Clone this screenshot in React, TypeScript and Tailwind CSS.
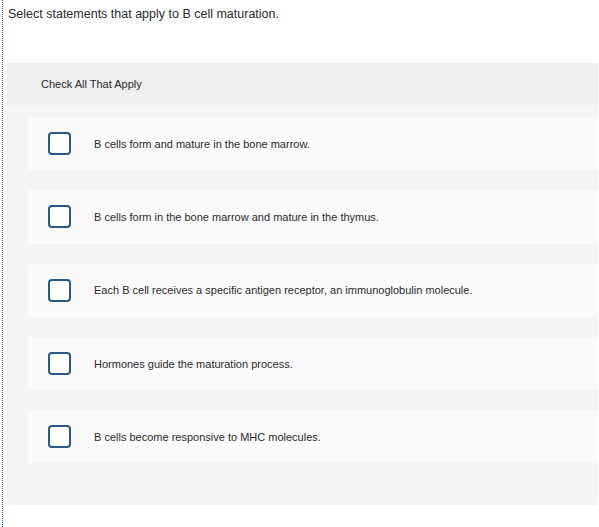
import React from "react";

const statements = [
  "B cells form and mature in the bone marrow.",
  "B cells form in the bone marrow and mature in the thymus.",
  "Each B cell receives a specific antigen receptor, an immunoglobulin molecule.",
  "Hormones guide the maturation process.",
  "B cells become responsive to MHC molecules.",
];

const App = () => {
  return (
    <div className="h-[527px] w-[599px] overflow-hidden bg-white font-['Liberation_Sans',Arial,sans-serif] text-[#2a2a2a]">
      <div className="ml-[2px] h-full border-l border-dotted border-[#3a6bb3] pl-[4px]">
        <p className="pt-[6px] pl-px text-[12.5px] leading-[16px]">
          Select statements that apply to B cell maturation.
        </p>

        <div className="mt-[41px] mr-[1px] rounded-b-[3px] bg-[#f4f4f4] pb-[42px]">
          {/* header strip */}
          <div className="flex h-[42px] items-center bg-[#efefef] pl-[34px] text-[11px]">
            Check All That Apply
          </div>

          <div className="flex flex-col gap-[20px] pt-[12px] pl-[21px]">
            {statements.map((s, i) => (
              <label
                key={i}
                className="flex h-[53.25px] items-center rounded-l-[3px] bg-[#fafafa]"
              >
                <span className="ml-[20px] h-[23px] w-[23px] rounded-[4px] border-2 border-[#285987] bg-white" />
                <span className="ml-[23px] pt-px text-[11px]">{s}</span>
              </label>
            ))}
          </div>
        </div>
      </div>
    </div>
  );
};

export default App;
